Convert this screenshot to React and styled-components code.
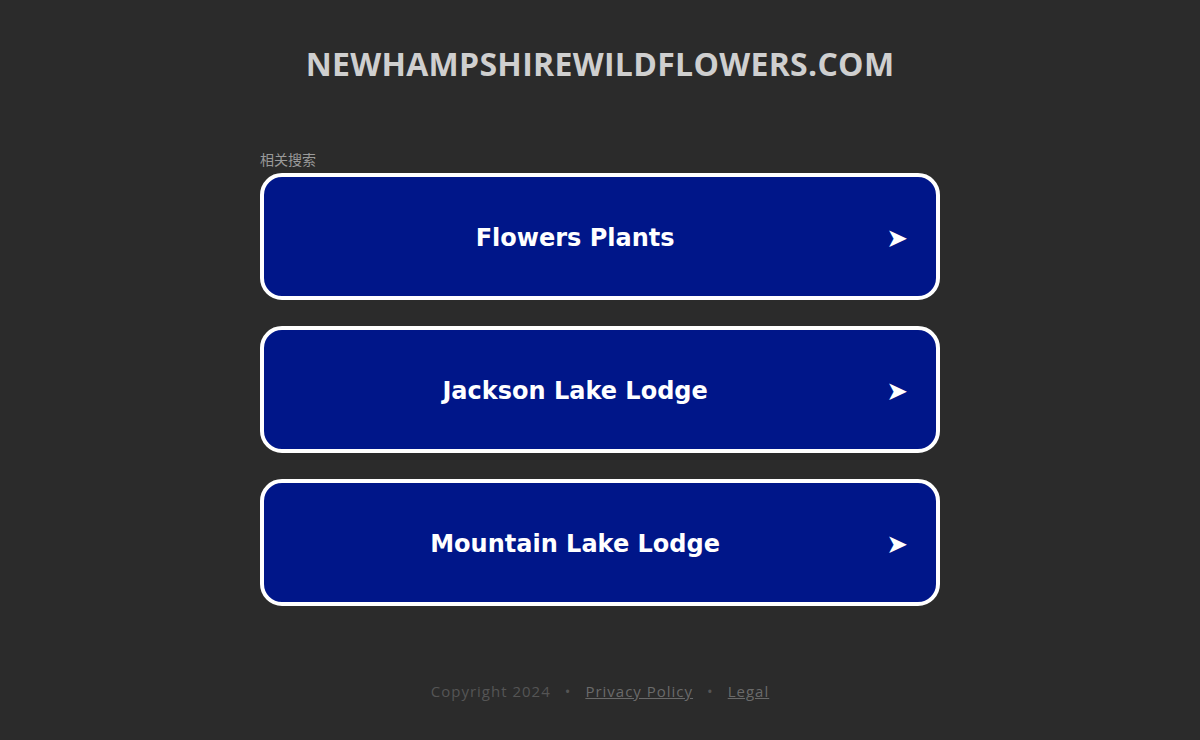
import styled, { createGlobalStyle } from 'styled-components';

const GlobalStyle = createGlobalStyle`
  html, body {
    margin: 0;
    padding: 0;
    background: #2b2b2b;
  }
`;

const Page = styled.div`
  min-height: 740px;
  display: flex;
  flex-direction: column;
  align-items: center;
  font-family: "Open Sans", "Noto Sans", sans-serif;
`;

const Title = styled.h1`
  margin: 43px 0 0;
  font-size: 32px;
  font-weight: 700;
  line-height: 42px;
  color: #cfcfcf;
  letter-spacing: 0.3px;
`;

const Related = styled.section`
  width: 680px;
  margin-top: 66px;
  display: flex;
  flex-direction: column;
`;

const Label = styled.div`
  font-family: "Noto Sans CJK SC", "Noto Sans", sans-serif;
  font-size: 14px;
  line-height: 16px;
  color: #9a9a9a;
  margin-bottom: 6px;
`;

const List = styled.div`
  display: flex;
  flex-direction: column;
  gap: 26px;
`;

const Item = styled.a`
  box-sizing: border-box;
  height: 127px;
  border: 4px solid #ffffff;
  border-radius: 22px;
  background: #001689;
  display: flex;
  align-items: center;
  padding: 2px 28px 0 0;
  text-decoration: none;
  cursor: pointer;
`;

const ItemText = styled.span`
  flex: 1;
  text-align: center;
  font-family: "DejaVu Sans", Verdana, sans-serif;
  font-weight: 700;
  font-size: 24px;
  color: #ffffff;
`;

const Arrow = styled.span`
  font-family: "DejaVu Sans", sans-serif;
  font-size: 26px;
  color: #ffffff;
`;

const Footer = styled.footer`
  margin-top: 75px;
  font-size: 15px;
  letter-spacing: 1px;
  color: #555555;
  display: flex;
  gap: 14px;
  align-items: center;
`;

const FooterLink = styled.a`
  color: #6a6a6a;
  text-decoration: underline;
`;

const items = ['Flowers Plants', 'Jackson Lake Lodge', 'Mountain Lake Lodge'];

export default function App() {
  return (
    <>
      <GlobalStyle />
      <Page>
        <Title>NEWHAMPSHIREWILDFLOWERS.COM</Title>
        <Related>
          <Label>相关搜索</Label>
          <List>
            {items.map((t) => (
              <Item key={t}>
                <ItemText>{t}</ItemText>
                <Arrow>➤</Arrow>
              </Item>
            ))}
          </List>
        </Related>
        <Footer>
          <span>Copyright 2024</span>
          <span>•</span>
          <FooterLink>Privacy Policy</FooterLink>
          <span>•</span>
          <FooterLink>Legal</FooterLink>
        </Footer>
      </Page>
    </>
  );
}
